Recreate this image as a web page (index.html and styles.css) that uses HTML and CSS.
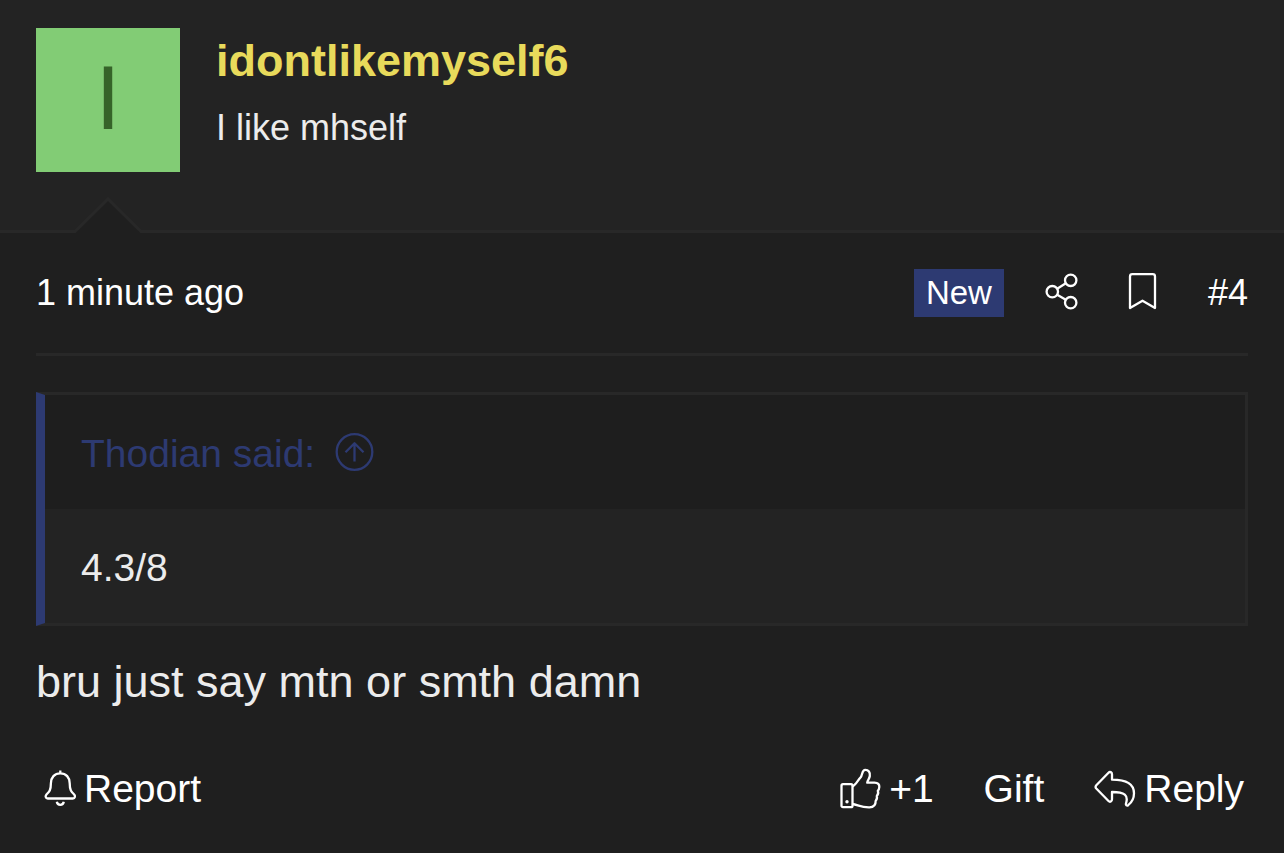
FILE: index.html
```
<!DOCTYPE html>
<html lang="en">
<head>
	<meta charset="utf-8">
	<meta name="viewport" content="width=device-width, initial-scale=1">
	<title>Thread - Post #4</title>
	<link rel="stylesheet" href="styles.css">
</head>
<body>
	<article class="post">
		<header class="post-user">
			<a href="#" class="avatar">I</a>
			<div class="user-info">
				<h4 class="user-name"><a href="#">idontlikemyself6</a></h4>
				<p class="user-title">I like mhself</p>
			</div>
			<svg class="arrow" width="72" height="36" viewBox="0 0 72 36">
				<path class="arrow-fill" d="M2 36L36 2L70 36Z"/>
				<path class="arrow-line" d="M0 34.500H3L36 2L69 34.500H72"/>
			</svg>
		</header>

		<div class="post-meta">
			<a href="#"><time>1 minute ago</time></a>
			<div class="meta-right">
				<span class="badge">New</span>
				<div class="meta-links">
					<a href="#" aria-label="Share">
						<svg class="icon" width="36" height="40" viewBox="0 1 36 40">
							<circle cx="26.700" cy="8.300" r="5.700"/>
							<circle cx="8.300" cy="19.700" r="5.700"/>
							<circle cx="26.700" cy="30.700" r="5.700"/>
							<path d="M13.200 16.700L21.800 11.300M13.200 22.700L21.800 27.700"/>
						</svg>
					</a>
					<a href="#" aria-label="Bookmark">
						<svg class="icon" width="36" height="40" viewBox="-2 1 36 40">
							<path d="M2 36V4.500Q2 2.200 4.300 2.200H24.700Q27 2.200 27 4.500V36L14.500 28.700Z"/>
						</svg>
					</a>
					<a href="#">#4</a>
				</div>
			</div>
		</div>

		<div class="post-body">
			<blockquote class="quote">
				<a href="#" class="quote-title">
					Thodian said:
					<svg class="icon" width="40" height="40" viewBox="0 -1 40 40">
						<circle cx="19.500" cy="20" r="17.800"/>
						<path d="M19.500 29.500V11.500M10.500 20.300L19.500 11.300L28.500 20.300"/>
					</svg>
				</a>
				<div class="quote-content">4.3/8</div>
			</blockquote>
			<p class="message">bru just say mtn or smth damn</p>
		</div>

		<footer class="post-actions">
			<button type="button" class="action">
				<svg class="icon" width="36" height="40" viewBox="-4 0 36 40">
					<path d="M16.300 1.500V4.300M16.300 4.300C10.500 4.300 6.900 8.500 6.900 14.300C6.900 21.500 5 23 2.600 25.300C1 27 1.500 29.500 3.800 29.500H28.800C31.100 29.500 31.600 27 30 25.300C27.600 23 25.700 21.500 25.700 14.300C25.700 8.500 22.100 4.300 16.300 4.300Z"/>
					<path d="M12.800 32.800C13.500 36.800 19.100 36.800 19.800 32.800"/>
				</svg>
				Report
			</button>
			<div class="actions-right">
				<button type="button" class="action">
					<svg class="icon" width="42" height="42" viewBox="0 0 42 42">
						<rect x="2.500" y="16.200" width="11" height="23" rx="1.500"/>
						<circle class="dot" cx="8" cy="33.700" r="1.700"/>
						<path d="M13.500 18.500C16.500 17.300 18.700 12.500 21.700 9.300C23.500 7.300 22.800 1.800 26.300 1.800C29.500 1.800 31.300 4.300 30.800 8C30.500 10.700 28.700 12 28.200 14.600H35.500C39 14.600 40.500 16.500 40.300 19C40.200 20.800 39.700 22 38.800 22.800C39.500 24.500 39.200 26.500 37.800 28C38.300 30 37.800 31.600 36.700 32.700C36.800 37.300 34.300 39.200 30.500 39.300C22.500 39.500 19 37 13.500 36"/>
					</svg>
					+1
				</button>
				<button type="button" class="action">Gift</button>
				<button type="button" class="action">
					<svg class="icon" width="42" height="40" viewBox="0 -1 42 40">
						<path d="M2.300 15.300L14.500 2.700C16 1.200 18 2.200 18 4.300V9.700C31 9.700 40 12.800 40 23.300C40 28.500 37.500 32.700 34.200 35.200C32.900 36.100 31.500 35.300 32 33.600C34.600 25.200 30.800 22 18 22V29.300C18 31.500 16 32.500 14.500 31L2.300 18.500C1.400 17.500 1.400 16.300 2.300 15.300Z"/>
					</svg>
					Reply
				</button>
			</div>
		</footer>
	</article>
</body>
</html>
```
FILE: styles.css
```
* {
	box-sizing: border-box;
}

body {
	margin: 0;
	background-color: #1f1f1f;
	font-family: "Liberation Sans", Arial, sans-serif;
	font-size: 39px;
	color: #ececec;
}

a {
	color: inherit;
	text-decoration: none;
}

h4,
p,
blockquote {
	margin: 0;
}

.icon {
	display: block;
	flex: none;
	fill: none;
	stroke: currentColor;
	stroke-width: 2.3;
	stroke-linejoin: round;
}

.icon .dot {
	fill: currentColor;
	stroke: none;
}

/* user bar */
.post-user {
	position: relative;
	display: flex;
	gap: 36px;
	padding: 28px 36px 58px;
	background-color: #232323;
	border-bottom: 3px solid #282828;
}

.avatar {
	display: flex;
	align-items: center;
	justify-content: center;
	width: 144px;
	height: 144px;
	padding-bottom: 4px;
	background-color: #82cc75;
	color: #366329;
	font-size: 90px;
	line-height: 88px;
}

.user-info {
	padding-top: 6px;
}

.user-name {
	font-size: 45px;
	line-height: 54px;
	color: #e8da5b;
}

.user-title {
	margin-top: 18px;
	font-size: 36px;
	line-height: 44px;
}

.arrow {
	position: absolute;
	left: 72px;
	bottom: -3px;
}

.arrow-fill {
	fill: #1f1f1f;
}

.arrow-line {
	fill: none;
	stroke: #282828;
	stroke-width: 3;
}

/* date, share and bookmark */
.post-meta {
	display: flex;
	align-items: center;
	justify-content: space-between;
	margin: 0 36px;
	padding: 36px 0;
	border-bottom: 3px solid #282828;
	font-size: 36px;
	line-height: 48px;
	color: #fff;
}

.meta-right {
	display: flex;
	align-items: center;
	gap: 40px;
}

.meta-links {
	display: flex;
	align-items: center;
	gap: 46px;
}

.badge {
	padding: 0 12px;
	background-color: #2d3a72;
	font-size: 33px;
}

/* message */
.post-body {
	padding: 36px 36px 0;
}

.quote {
	background-color: #232323;
	border: 3px solid #282828;
	border-left: 9px solid #2d3a72;
}

.quote-title {
	display: flex;
	align-items: flex-start;
	gap: 20px;
	padding: 36px 36px 32px;
	background-color: #1e1e1e;
	color: #2d3a72;
	line-height: 46px;
}

.quote-content {
	padding: 36px 36px 32px;
	line-height: 46px;
}

.message {
	margin-top: 26px;
	font-size: 45px;
	line-height: 60px;
}

/* buttons */
.post-actions {
	display: flex;
	justify-content: space-between;
	padding: 56px 40px 38px;
}

.actions-right {
	display: flex;
	gap: 50px;
}

.action {
	display: flex;
	align-items: center;
	gap: 8px;
	padding: 0;
	border: none;
	background: none;
	font-family: inherit;
	font-size: 39px;
	line-height: 42px;
	color: #fff;
	cursor: pointer;
}
```
